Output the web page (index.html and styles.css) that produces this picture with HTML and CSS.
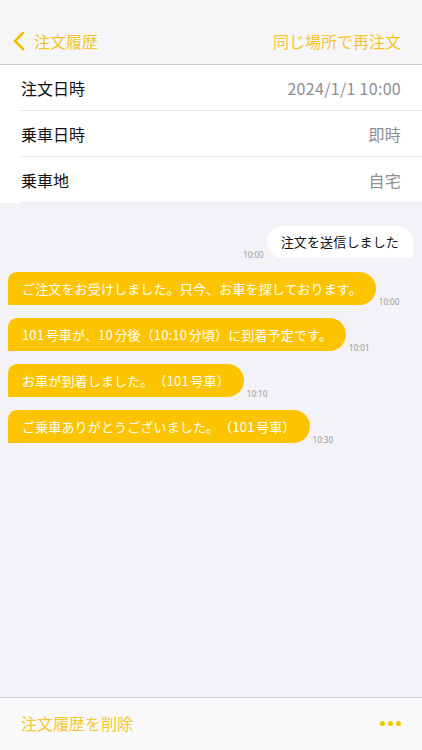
FILE: index.html
```html
<!DOCTYPE html>
<html lang="ja">
<head>
    <meta charset="UTF-8">
    <title>注文履歴</title>
    <link rel="stylesheet" href="styles.css">
</head>
<body>
    <div class="navbar">
        <a class="back" href="#">
            <svg class="chevron" width="12" height="20" viewBox="0 0 12 20">
                <path d="M10 2 L2 10 L10 18" fill="none" stroke="#f2c200" stroke-width="2.6" stroke-linecap="round" stroke-linejoin="round"/>
            </svg>
            注文履歴
        </a>
        <a class="nav-action" href="#">同じ場所で再注文</a>
    </div>

    <div class="details">
        <div class="row">
            <span class="label">注文日時</span>
            <span class="value">2024/1/1 10:00</span>
        </div>
        <div class="row">
            <span class="label">乗車日時</span>
            <span class="value">即時</span>
        </div>
        <div class="row">
            <span class="label">乗車地</span>
            <span class="value">自宅</span>
        </div>
    </div>

    <div class="chat">
        <div class="msg msg-out">
            <span class="time">10:00</span>
            <div class="bubble bubble-out">注文を送信しました</div>
        </div>
        <div class="msg msg-in">
            <div class="bubble bubble-in">ご注文をお受けしました。只今、お車を探しております。</div>
            <span class="time">10:00</span>
        </div>
        <div class="msg msg-in">
            <div class="bubble bubble-in">101号車が、10分後（10:10分頃）に到着予定です。</div>
            <span class="time">10:01</span>
        </div>
        <div class="msg msg-in">
            <div class="bubble bubble-in">お車が到着しました。（101号車）</div>
            <span class="time">10:10</span>
        </div>
        <div class="msg msg-in">
            <div class="bubble bubble-in">ご乗車ありがとうございました。（101号車）</div>
            <span class="time">10:30</span>
        </div>
    </div>

    <div class="toolbar">
        <a class="delete" href="#">注文履歴を削除</a>
        <span class="more"><i></i><i></i><i></i></span>
    </div>
</body>
</html>
```

FILE: styles.css
```css
html, body {
    height: 100%;
}
body {
    margin: 0;
    padding: 0;
    font-family: "Noto Sans CJK JP", "Noto Sans", sans-serif;
    background-color: #f2f2f7;
    color: #111;
    display: flex;
    flex-direction: column;
    text-spacing-trim: space-all;
    text-autospace: normal;
}
a {
    text-decoration: none;
}
.navbar {
    height: 65px;
    border-bottom: 1px solid #c8c8cc;
    background-color: #f6f6f9;
    display: flex;
    align-items: flex-end;
    justify-content: space-between;
    padding: 0 21px 12px 13px;
    box-sizing: border-box;
}
.back {
    color: #f4c62c;
    font-size: 16px;
    display: flex;
    align-items: center;
    line-height: 22px;
}
.chevron {
    margin-right: 9px;
}
.nav-action {
    color: #f4c62c;
    font-size: 16px;
    line-height: 22px;
}
.details {
    background-color: #fff;
    padding-left: 21px;
}
.row {
    height: 45px;
    display: flex;
    align-items: center;
    justify-content: space-between;
    padding-right: 21px;
    border-bottom: 1px solid #e4e4e7;
    font-size: 16px;
}
.row:last-child {
    border-bottom: 1px solid #ececef;
}
.value {
    color: #8e8e93;
    letter-spacing: 0.3px;
}
.chat {
    flex: 1;
    padding: 23px 9px 0 8px;
    display: flex;
    flex-direction: column;
    gap: 13px;
}
.msg {
    display: flex;
    align-items: flex-end;
}
.msg-out {
    justify-content: flex-end;
    margin-bottom: 1px;
}
.bubble {
    font-size: 13px;
    letter-spacing: 0.15px;
    line-height: 33px;
    height: 33px;
    padding: 0 14px;
    white-space: nowrap;
}
.bubble-out {
    background-color: #fff;
    color: #111;
    border-radius: 16px 16px 0 16px;
    height: 32px;
    line-height: 32px;
}
.bubble-in {
    background-color: #fcc400;
    color: #fff;
    border-radius: 9px 17px 17px 0;
}
.time {
    font-size: 8px;
    color: #9a9aa0;
    margin: 0 3px -2px;
    font-family: "Noto Sans", sans-serif;
}
.toolbar {
    height: 50px;
    border-top: 1px solid #d4d4d8;
    background-color: #f9f9fb;
    display: flex;
    align-items: center;
    justify-content: space-between;
    padding: 0 21px 2px;
}
.delete {
    color: #f4c830;
    font-size: 16px;
}
.more {
    display: flex;
    gap: 3px;
}
.more i {
    width: 5px;
    height: 5px;
    border-radius: 50%;
    background-color: #f4c400;
}
```
